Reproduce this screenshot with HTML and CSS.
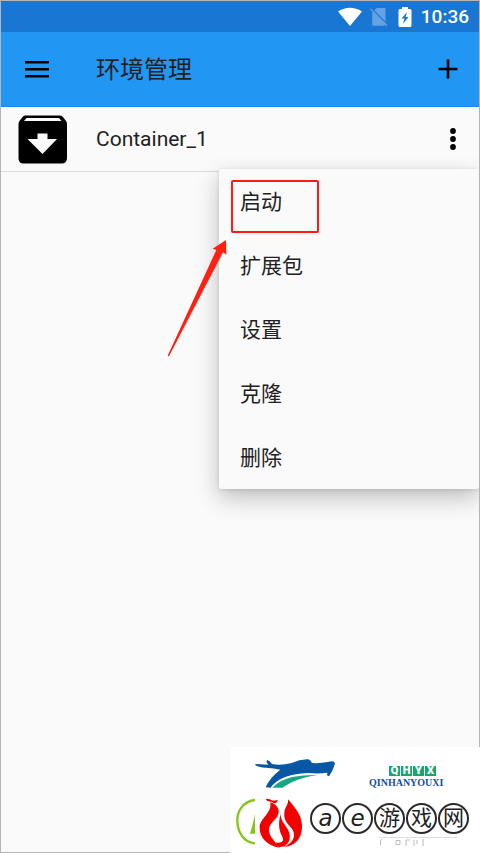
FILE: index.html
```html
<!DOCTYPE html>
<html lang="zh-CN">
<head>
<meta charset="utf-8">
<meta name="viewport" content="width=device-width, initial-scale=1">
<title>环境管理</title>
<link rel="stylesheet" href="styles.css">
</head>
<body>
<div class="screen">
  <div class="status-bar">
    <svg class="wifi" viewBox="0 0 24 20" aria-hidden="true"><path fill="#fff" d="M0 4.500Q12-3 24 4.500L12 19z"/></svg>
    <svg class="sim" viewBox="0 0 18 20" aria-hidden="true"><path fill="#63a2e4" d="M7 1h8.500v14L3.500 3.500zM2.500 5.500L14.500 18.500H2.500z"/><path fill="#63a2e4" d="M2.500 4L15.500 17V18.500H2.500z"/><path stroke="#1976d2" stroke-width="1.200" d="M1.500 1.500L17.500 17.500"/><path stroke="#63a2e4" stroke-width="1.300" d="M.5 2L17 18.500"/></svg>
    <svg class="battery" viewBox="0 0 14 20" aria-hidden="true"><path fill="#fff" d="M4 0h6v2h2q1.500 0 1.500 1.500v15Q13.500 20 12 20H2Q.5 20 .5 18.500v-15Q.5 2 2 2h2z"/><path fill="#1976d2" d="M9 5L3.500 11.500h3L5 17l5.500-7h-3z"/></svg>
    <span class="clock">10:36</span>
  </div>
  <header class="app-bar">
    <button class="icon-button" aria-label="菜单"><svg class="icon-menu" viewBox="0 0 26 18"><path d="M1 1h24v2.500H1zM1 8h24v2.500H1zM1 15h24v2.500H1z"/></svg></button>
    <h1 class="title">环境管理</h1>
    <button class="icon-button" aria-label="添加"><svg class="icon-add" viewBox="0 0 20 20"><path d="M8.700.5h2.600v8.200h8.200v2.600h-8.200v8.200H8.700v-8.200H.5V8.700h8.200z"/></svg></button>
  </header>
  <main>
    <div class="container-row">
      <svg class="icon-archive" viewBox="0 0 49 49" aria-hidden="true"><path fill-rule="evenodd" d="M7 .5h35q2 0 3 1.500l3 4q1 1 1 3v34q0 5.500-5.500 5.500h-38Q.5 48.500.5 43V9q0-2 1-3l3-4Q5.500.5 7 .5zM8.500 3L6 6h37.500L41 3zM19.500 18.500V24h-10L24.500 39 39 24H29.500v-5.500z"/></svg>
      <span class="container-name">Container_1</span>
      <button class="icon-button" aria-label="更多"><svg class="icon-more" viewBox="0 0 6 22"><circle cx="3" cy="3" r="2.900"/><circle cx="3" cy="11" r="2.900"/><circle cx="3" cy="19" r="2.900"/></svg></button>
      <div class="menu" role="menu">
        <button class="menu-item" role="menuitem">启动</button>
        <button class="menu-item" role="menuitem">扩展包</button>
        <button class="menu-item" role="menuitem">设置</button>
        <button class="menu-item" role="menuitem">克隆</button>
        <button class="menu-item" role="menuitem">删除</button>
        <span class="highlight"></span>
        <svg class="arrow" viewBox="0 0 225 390" aria-hidden="true"><path fill="#ff2012" d="M198 30L158 56l11 4L23 377l4 2L189 67l10 7z"/></svg>
      </div>
    </div>
  </main>
</div>
<aside class="watermark">
  <div class="sponsor">
    <svg class="dragon" viewBox="0 0 270 120" aria-hidden="true"><path fill="#0757a4" d="M14 38Q18 35 33 37L55 38Q47 30 51 24Q59 26 66 36Q92 41 125 33Q150 21 175 22Q183 25 186 33Q215 35 246 28Q257 30 254 38Q248 57 237 73L231 70L232 62Q205 66 173 63Q120 65 88 83Q69 95 62 107L47 106Q59 77 91 53Q72 49 48 47Q26 46 14 38z"/><path fill="#19a583" d="M67 107Q87 85 126 75Q164 68 202 69Q157 76 125 91Q107 101 97 107z"/></svg>
    <div class="brand">
      <div class="brand-tiles"><span>Q</span><span>H</span><span>Y</span><span>X</span></div>
      <div class="brand-name">QINHANYOUXI</div>
    </div>
  </div>
  <div class="site">
    <svg class="flame" viewBox="0 0 228 180" aria-hidden="true"><path fill="none" stroke="#87c51b" stroke-width="7" d="M69 24C33 28 15 58 16 88C17 122 36 151 69 154"/><path fill="#87c51b" d="M69 67v58H54Q64 93 69 67z"/><g fill="#f20000"><path d="M101 21Q112 18 119 25Q128 27 137 23Q137 32 127 34Q119 28 106 27z"/><path d="M115 30C143 42 146 60 132 79C119 94 105 104 113 125C119 141 133 152 143 167C107 162 82 136 83 107C83 78 120 66 115 30z"/><path d="M168 22C193 51 211 73 210 106C209 143 187 163 152 166C174 156 186 146 186 128C186 102 154 99 157 63C158 45 170 39 168 22z"/><path d="M146 66C145 91 170 105 173 128C176 149 163 165 143 165C154 155 157 142 148 128C140 112 139 89 146 66z"/><path d="M131 151Q146 156 154 145Q158 160 143 166Q134 162 131 151z"/></g></svg>
    <div class="site-name">
      <span class="latin">a</span><span class="latin">e</span><span>游</span><span>戏</span><span>网</span>
      <svg class="fragments" viewBox="0 0 80 10" aria-hidden="true"><path fill="none" stroke="#ddd" d="M0 .5h78"/><path fill="none" stroke="#bbb" d="M3 2L1.500 4v4M17 8.500V3.500h4v4h-3M27 9V3h4M35 9V3M38 3v4M44 2v7"/></svg>
    </div>
  </div>
</aside>
</body>
</html>
```
FILE: styles.css
```css
* {
  box-sizing: border-box;
}

body {
  margin: 0;
  color: #212121;
  background: #fafafa;
  font-family: Roboto, "Noto Sans CJK SC", sans-serif;
}

button {
  border: 0;
  padding: 0;
  background: none;
  color: inherit;
  font: inherit;
}

svg {
  display: block;
  flex: none;
}

.screen {
  min-height: 100vh;
  border: 1px solid #b5b5b5;
  overflow: hidden;
}

.status-bar {
  display: flex;
  align-items: center;
  justify-content: flex-end;
  height: 31px;
  padding-right: 10px;
  background: #1976d2;
  color: #fff;
}

.wifi {
  width: 24px;
  height: 20px;
}

.sim {
  width: 18px;
  height: 20px;
  margin-left: 8px;
}

.battery {
  width: 14px;
  height: 20px;
  margin-left: 10px;
}

.clock {
  margin-left: 9px;
  font-size: 19px;
  font-weight: 500;
  line-height: 31px;
}

.app-bar {
  display: flex;
  align-items: center;
  height: 75px;
  background: #2196f3;
  border-bottom: 1px solid #2089df;
}

.icon-button {
  display: flex;
  align-items: center;
  justify-content: center;
  flex: none;
  width: 52px;
  height: 52px;
}

.app-bar .icon-button:first-child {
  width: 72px;
}

.app-bar .icon-button:last-child {
  width: 62px;
}

.icon-menu {
  width: 26px;
  height: 18px;
}

.icon-add {
  width: 20px;
  height: 20px;
}

.title {
  flex: 1;
  margin: 0;
  padding: 2px 0 0 23px;
  font-size: 24px;
  font-weight: 400;
  line-height: 32px;
}

.container-row {
  position: relative;
  display: flex;
  align-items: center;
  height: 65px;
  padding-left: 17px;
  border-bottom: 1px solid #dcdcdc;
}

.icon-archive {
  width: 49px;
  height: 49px;
}

.container-name {
  flex: 1;
  padding-left: 29px;
  font-size: 21px;
  line-height: 28px;
}

.icon-more {
  width: 6px;
  height: 22px;
}

.menu {
  position: absolute;
  top: 62px;
  right: 0;
  width: 260px;
  background: #fafafa;
  border-radius: 2px;
  box-shadow: 0 9px 24px rgba(0, 0, 0, 0.24), 0 1px 4px rgba(0, 0, 0, 0.12);
}

.menu-item {
  display: block;
  width: 100%;
  height: 64px;
  padding: 2px 0 0 21px;
  font-size: 21px;
  line-height: 32px;
  text-align: left;
}

.highlight {
  position: absolute;
  top: 11px;
  left: 12px;
  width: 88px;
  height: 53px;
  border: 2px solid #ff1a12;
  border-radius: 2px;
}

.arrow {
  position: absolute;
  top: 61px;
  left: -59px;
  width: 75px;
  height: 130px;
}

.watermark {
  position: fixed;
  right: 0;
  bottom: 0;
  width: 250px;
  height: 106px;
  padding: 5px 2px 0;
  background: #fff;
}

.sponsor {
  display: flex;
  height: 40px;
  padding-left: 18px;
}

.dragon {
  width: 90px;
  height: 40px;
}

.brand {
  padding: 14px 0 0 29px;
}

.brand-tiles {
  display: flex;
  gap: 1px;
  padding-left: 20px;
}

.brand-tiles span {
  width: 11px;
  height: 10px;
  background: #19a56f;
  color: #fff;
  font-size: 11px;
  font-weight: 900;
  line-height: 10px;
  text-align: center;
}

.brand-name {
  color: #144f9f;
  font-family: "Liberation Serif", serif;
  font-size: 10px;
  font-weight: 700;
  line-height: 14px;
}

.site {
  display: flex;
}

.flame {
  width: 76px;
  height: 60px;
}

.site-name {
  position: relative;
  display: flex;
  gap: 1px;
  padding: 11px 0 0 2px;
}

.site-name span {
  width: 31px;
  height: 31px;
  border: 2px solid #292929;
  border-radius: 50%;
  font-size: 21px;
  line-height: 27px;
  display: flex;
  align-items: center;
  justify-content: center;
}

.site-name .latin {
  font-family: "DejaVu Sans", sans-serif;
  font-style: italic;
  font-size: 23px;
}

.fragments {
  position: absolute;
  top: 45px;
  left: 71px;
  width: 80px;
  height: 10px;
}
```
